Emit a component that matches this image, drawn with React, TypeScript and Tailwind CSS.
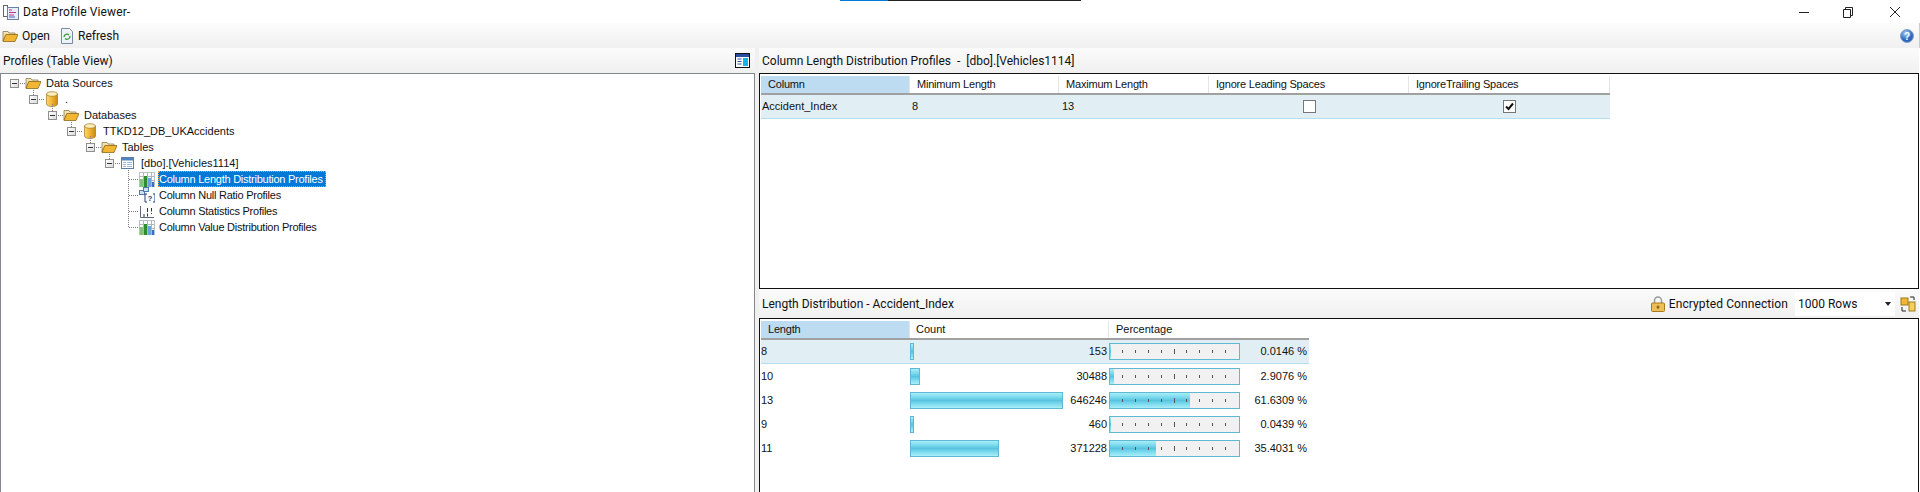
import React from 'react';

const FolderIcon = () => (
  <svg width="16" height="16" viewBox="0 0 16 16" className="shrink-0">
    <path d="M1 3.500h5l1 1.500h6v2H4L1 13z" fill="#f3e3b0" stroke="#8a7a50" strokeWidth="0.8" />
    <path d="M1 13.500 3.800 6.500H16l-3 7z" fill="#f2b632" stroke="#8f6a1a" strokeWidth="0.8" />
  </svg>
);

const DbIcon = () => (
  <svg width="16" height="16" viewBox="0 0 16 16" className="shrink-0">
    <defs>
      <linearGradient id="db" x1="0" x2="1" y1="0" y2="0">
        <stop offset="0" stopColor="#f6d77a" />
        <stop offset="0.45" stopColor="#f5b72f" />
        <stop offset="1" stopColor="#c98a17" />
      </linearGradient>
    </defs>
    <path d="M2.500 3v10c0 1.400 2.500 2.500 5.500 2.500s5.500-1.100 5.500-2.500V3z" fill="url(#db)" stroke="#a07820" strokeWidth="0.7" />
    <ellipse cx="8" cy="3" rx="5.500" ry="2.300" fill="#fbeeb8" stroke="#a07820" strokeWidth="0.7" />
  </svg>
);

const TableIcon = () => (
  <svg width="14" height="14" viewBox="0 0 14 14" className="shrink-0">
    <rect x="0.500" y="1.500" width="12" height="11" fill="#fff" stroke="#5b7fa8" />
    <rect x="1" y="2" width="11" height="2.500" fill="#4f83c4" />
    <path d="M2 6.500h3M6 6.500h5M2 8.500h3M6 8.500h5M2 10.500h3M6 10.500h5" stroke="#9db7d6" />
  </svg>
);

const DistIcon = () => (
  <svg width="16" height="16" viewBox="0 0 16 16" className="shrink-0">
    <rect x="0.500" y="1.500" width="15" height="14" fill="#fff" stroke="#b9bfc7" />
    <path d="M4.500 1.500v14M8.500 1.500v14M12.500 1.500v14M.5 5.500h15M.5 9.500h15" stroke="#aeb6c2" />
    <rect x="1" y="8" width="3" height="8" fill="#7cc576" />
    <rect x="5" y="5" width="3" height="11" fill="#2f8c2e" />
    <rect x="9" y="7" width="3" height="9" fill="#6f9fe0" />
    <rect x="13" y="11" width="2" height="5" fill="#3b6fc0" />
  </svg>
);

const NullIcon = () => (
  <svg width="16" height="16" viewBox="0 0 16 16" className="shrink-0">
    <rect x="0.500" y="3.500" width="5" height="4" fill="#cfe0f5" stroke="#4f78b0" />
    <rect x="4.500" y="0.500" width="5" height="4" fill="#cfe0f5" stroke="#4f78b0" />
    <path d="M8 7H6v8h2M14 7h2v8h-2" stroke="#1f3f78" fill="none" />
    <text x="8.400" y="14" fontSize="8" fontWeight="700" fill="#1f3f78" fontFamily="Liberation Sans, sans-serif">?</text>
  </svg>
);

const StatsIcon = () => (
  <svg width="16" height="16" viewBox="0 0 16 16" className="shrink-0">
    <path d="M1.500 3v11.500H15" stroke="#5d6a7a" fill="none" />
    <path d="M5 11v3M8.500 5v4M8.500 10.500v3M12.500 5v3.500M12.500 10v1" stroke="#2c3340" fill="none" />
  </svg>
);

const icons: Record<string, React.ReactNode> = {
  folder: <FolderIcon />,
  db: <DbIcon />,
  table: <TableIcon />,
  dist: <DistIcon />,
  nullr: <NullIcon />,
  stats: <StatsIcon />,
};

const treeRows = [
  { level: 0, icon: 'folder', label: 'Data Sources' },
  { level: 1, icon: 'db', label: '.' },
  { level: 2, icon: 'folder', label: 'Databases' },
  { level: 3, icon: 'db', label: 'TTKD12_DB_UKAccidents' },
  { level: 4, icon: 'folder', label: 'Tables' },
  { level: 5, icon: 'table', label: '[dbo].[Vehicles1114]' },
  { level: 6, icon: 'dist', label: 'Column Length Distribution Profiles', selected: true },
  { level: 6, icon: 'nullr', label: 'Column Null Ratio Profiles' },
  { level: 6, icon: 'stats', label: 'Column Statistics Profiles' },
  { level: 6, icon: 'dist', label: 'Column Value Distribution Profiles' },
];

const TreeLines = () => {
  let d = '';
  treeRows.forEach((r, i) => {
    const y = 9.5 + i * 16;
    const x = 13.5 + r.level * 19;
    if (r.level < 6) {
      d += `M${x + 5} ${y}H${x + 10}`;
      if (r.level > 0) d += `M${x} ${y - 12}V${y - 5}`;
    } else {
      d += `M${x} ${y}H${x + 10}`;
    }
  });
  d += `M127.500 ${9.5 + 5 * 16 + 6}V${9.5 + 9 * 16}`;
  return (
    <svg className="absolute left-0 top-0 pointer-events-none" width="200" height="200" shapeRendering="crispEdges">
      <path d={d} stroke="#7d7d7d" strokeDasharray="1 1" fill="none" />
    </svg>
  );
};

const Expander = () => (
  <span className="w-[9px] h-[9px] border border-[#8f8f8f] bg-[linear-gradient(135deg,#ffffff,#dcdcdc)] flex items-center justify-center shrink-0">
    <span className="w-[5px] h-px bg-[#333]"></span>
  </span>
);

const TreeRow = ({ level, icon, label, selected }: { level: number; icon: string; label: string; selected?: boolean }) => (
  <div className="h-4 flex items-center" style={{ paddingLeft: 9 + level * 19 }}>
    {level < 6 ? <Expander /> : <span className="w-[9px] shrink-0"></span>}
    <span className="w-4 h-4 ml-[6px] flex items-center justify-center shrink-0">{icons[icon]}</span>
    {selected ? (
      <span className="ml-[3px] h-4 pr-[2px] leading-[14px] tracking-[-0.25px] bg-[#0078d7] text-white border border-dotted border-[#e8a33d] whitespace-nowrap">{label}</span>
    ) : (
      <span className={`whitespace-nowrap ${level === 6 ? 'ml-[4px] tracking-[-0.25px]' : 'ml-[5px]'}`}>{label}</span>
    )}
  </div>
);

const dist = [
  { len: '8', count: 153, bar: 4, pct: 0.0146 },
  { len: '10', count: 30488, bar: 10, pct: 2.9076 },
  { len: '13', count: 646246, bar: 153, pct: 61.6309 },
  { len: '9', count: 460, bar: 4, pct: 0.0439 },
  { len: '11', count: 371228, bar: 89, pct: 35.4031 },
];

const ticks = [13, 26, 39, 52, 65, 77, 90, 103, 116];

const barFill = 'bg-[linear-gradient(180deg,#a8eef9_0%,#7fdcef_25%,#58c4e0_50%,#7fdcef_75%,#a8eef9_100%)]';

const PctBar = ({ pct }: { pct: number }) => (
  <div className="relative w-[131px] h-[17px] border border-[#5fb8d4] bg-[#f1f1f1] shrink-0">
    <div className={`h-full ${barFill}`} style={{ width: `${Math.max(pct, 1)}%` }}></div>
    {ticks.map((t, i) => (
      <span
        key={t}
        className={`absolute w-px bg-[#555] ${i === 4 ? 'top-[5px] h-[5px]' : 'top-[6px] h-[3px]'}`}
        style={{ left: t - 1 }}
      ></span>
    ))}
  </div>
);

const Head = ({ label, active, w }: { label: string; active?: boolean; w: string }) => (
  <div className={`${w} h-full flex items-center pl-[7px] tracking-[-0.2px] border-r border-[#e5e5e5] ${active ? 'bg-[#bddbf1]' : 'bg-white'}`}>{label}</div>
);

const Check = ({ checked }: { checked?: boolean }) => (
  <span className="w-[13px] h-[13px] border border-[#777] bg-white flex items-center justify-center">
    {checked && (
      <svg width="9" height="9" viewBox="0 0 9 9">
        <path d="M1 4.500 3.500 7 8 1.500" stroke="#111" strokeWidth="2" fill="none" />
      </svg>
    )}
  </span>
);

export default function App() {
  return (
    <div className="relative w-[1920px] h-[492px] overflow-hidden bg-white text-[12px] text-[#111] font-['Roboto',sans-serif]">
      <div className="absolute left-[840px] top-0 flex h-px">
        <div className="w-[48px] bg-[#0078d7]"></div>
        <div className="w-[193px] bg-[#222]"></div>
      </div>

      {/* title bar */}
      <div className="h-[23px] flex items-center pl-[3px] bg-white">
        <svg width="16" height="16" viewBox="0 0 16 16" className="shrink-0">
          <rect x="0.500" y="1.500" width="4" height="11" fill="#fff" stroke="#666" />
          <rect x="4.500" y="3.500" width="11" height="12" fill="#e8edf7" stroke="#6a7fa5" />
          <path d="M6 6h3M6 8.500h7M6 11h5" stroke="#c0308a" strokeWidth="1.200" />
          <path d="M6 13h6" stroke="#4a5fc0" />
        </svg>
        <span className="ml-[4px] tracking-[0.1px]">Data Profile Viewer-</span>
        <div className="ml-auto flex items-center h-full">
          <svg width="12" height="12" viewBox="0 0 12 12" className="mr-[32px]"><path d="M1 6.500h10" stroke="#222" /></svg>
          <svg width="12" height="12" viewBox="0 0 12 12" className="mr-[35px]"><path d="M1.500 3.500h7v8h-7zM3.500 3.500v-2h7v8h-2" stroke="#222" fill="none" /></svg>
          <svg width="12" height="12" viewBox="0 0 12 12" className="mr-[19px]"><path d="M1 1l10 10M11 1 1 11" stroke="#222" /></svg>
        </div>
      </div>

      {/* toolbar */}
      <div className="h-[25px] flex items-center pl-[2px] pr-[5px] border-r border-[#cccccc] bg-[linear-gradient(180deg,#fcfcfc,#f0f0f0)]">
        <FolderIcon />
        <span className="ml-[4px]">Open</span>
        <svg width="14" height="16" viewBox="0 0 14 16" className="ml-[10px] shrink-0">
          <path d="M1.500 .5h8l3 3v12h-11z" fill="#eef3f9" stroke="#7a8aa0" />
          <path d="M4 9a3 3 0 0 1 5-2M10 8a3 3 0 0 1-5 2.500" stroke="#3a9a3a" strokeWidth="1.300" fill="none" />
        </svg>
        <span className="ml-[4px]">Refresh</span>
        <svg width="14" height="14" viewBox="0 0 14 14" className="ml-auto">
          <defs>
            <radialGradient id="help" cx="0.400" cy="0.300">
              <stop offset="0" stopColor="#a8cdf5" />
              <stop offset="1" stopColor="#2a66c0" />
            </radialGradient>
          </defs>
          <circle cx="7" cy="7" r="6.500" fill="url(#help)" stroke="#8aa0c0" />
          <text x="7" y="10.500" textAnchor="middle" fontSize="10" fontWeight="700" fill="#fff" fontFamily="Liberation Sans, sans-serif">?</text>
        </svg>
      </div>

      <div className="flex h-[444px]">
        {/* left pane */}
        <div className="w-[755px] flex flex-col">
          <div className="h-[25px] flex items-center pl-[3px] pr-[5px] bg-[linear-gradient(180deg,#fbfbfb,#f0f0f0)]">
            <span>Profiles (Table View)</span>
            <svg width="15" height="15" viewBox="0 0 15 15" className="ml-auto">
              <rect x="0.500" y="0.500" width="14" height="14" fill="#fff" stroke="#111" />
              <rect x="1" y="1" width="13" height="3" fill="#2b4f9e" />
              <path d="M2.500 6h4M2.500 8.500h4M2.500 11h4" stroke="#2b4f9e" />
              <rect x="8" y="5" width="5" height="8" fill="#12b5e8" />
            </svg>
          </div>
          <div className="relative flex-1 pt-px border-t border-l border-r border-[#828790] bg-white text-[11px] font-['Liberation_Sans',sans-serif]">
            <TreeLines />
            {treeRows.map((r) => (
              <TreeRow key={r.label} {...r} />
            ))}
          </div>
        </div>

        <div className="w-[4px] bg-[#f0f0f0]"></div>

        {/* right pane */}
        <div className="w-[1161px] flex flex-col pr-px">
          <div className="h-[25px] flex items-center pl-[3px] bg-[linear-gradient(180deg,#fbfbfb,#f0f0f0)]">
            <span className="whitespace-pre">Column Length Distribution Profiles  -  [dbo].[Vehicles1114]</span>
          </div>
          <div className="h-[216px] border border-[#111] pl-px pt-[2px] bg-white text-[11px] font-['Liberation_Sans',sans-serif]">
            <div className="flex h-[19px] w-[849px] border-b-2 border-[#a0a0a0]">
              <Head label="Column" active w="w-[149px]" />
              <Head label="Minimum Length" w="w-[149px]" />
              <Head label="Maximum Length" w="w-[150px]" />
              <Head label="Ignore Leading Spaces" w="w-[200px]" />
              <Head label="IgnoreTrailing Spaces" w="w-[201px]" />
            </div>
            <div className="flex items-center h-[24px] w-[849px] bg-[#e1eff5] border-b border-[#b5dfee]">
              <div className="w-[149px] pl-px">Accident_Index</div>
              <div className="w-[149px] pl-[2px]">8</div>
              <div className="w-[150px] pl-[3px]">13</div>
              <div className="w-[200px] flex justify-center"><Check /></div>
              <div className="w-[201px] flex justify-center"><Check checked /></div>
            </div>
          </div>

          <div className="h-[29px] flex items-center pl-[3px] bg-[linear-gradient(180deg,#fbfbfb,#f0f0f0)]">
            <span>Length Distribution - Accident_Index</span>
            <svg width="16" height="16" viewBox="0 0 16 16" className="ml-auto shrink-0">
              <path d="M4.500 7V4.500a3.500 3.500 0 0 1 7 0V7" stroke="#9a9a9a" strokeWidth="1.500" fill="none" />
              <rect x="1.500" y="7" width="13" height="8.500" rx="1" fill="#eebf55" stroke="#a87a20" />
              <path d="M8 9.500v3.500M6.500 11h3" stroke="#6a4a10" />
            </svg>
            <span className="ml-[3px] tracking-[0.1px]">Encrypted Connection</span>
            <div className="ml-[7px] w-[100px] h-[24px] bg-white flex items-center pl-[3px] pr-[4px]">
              <span>1000 Rows</span>
              <svg width="6" height="4" viewBox="0 0 6 4" className="ml-auto"><path d="M0 0h6L3 4z" fill="#222" /></svg>
            </div>
            <svg width="16" height="16" viewBox="0 0 16 16" className="ml-[5px] mr-[3px] shrink-0">
              <rect x="1" y="2" width="7" height="7" fill="#f2b632" stroke="#9a7a20" />
              <rect x="9" y="6" width="6" height="9" fill="#f5cf5a" stroke="#9a7a20" />
              <path d="M10 1h4v3M2 11v4h4" stroke="#222" fill="none" />
            </svg>
          </div>
          <div className="flex-1 border-t border-l border-r border-[#111] pl-px pt-[2px] bg-white text-[11px] font-['Liberation_Sans',sans-serif]">
            <div className="flex h-[19px] w-[548px] border-b-2 border-[#a0a0a0]">
              <Head label="Length" active w="w-[149px]" />
              <div className="w-[199px] h-full flex items-center pl-[6px] border-r border-[#e5e5e5]">Count</div>
              <div className="w-[200px] h-full flex items-center pl-[7px]">Percentage</div>
            </div>
            {dist.map((r, i) => (
              <div
                key={r.len}
                className={`flex items-center h-[24px] w-[548px] ${i === 0 ? 'bg-[#e1eff5] border-b border-[#b5dfee]' : ''}`}
              >
                <div className="w-[149px]">{r.len}</div>
                <div className="w-[199px] flex items-center pr-[2px]">
                  <div className={`h-[17px] border border-[#5fb8d4] ${barFill}`} style={{ width: r.bar }}></div>
                  <span className="ml-auto">{r.count}</span>
                </div>
                <div className="w-[200px] flex items-center pr-[2px]">
                  <PctBar pct={r.pct} />
                  <span className="ml-auto">{r.pct.toFixed(4)} %</span>
                </div>
              </div>
            ))}
          </div>
        </div>
      </div>
    </div>
  );
}
